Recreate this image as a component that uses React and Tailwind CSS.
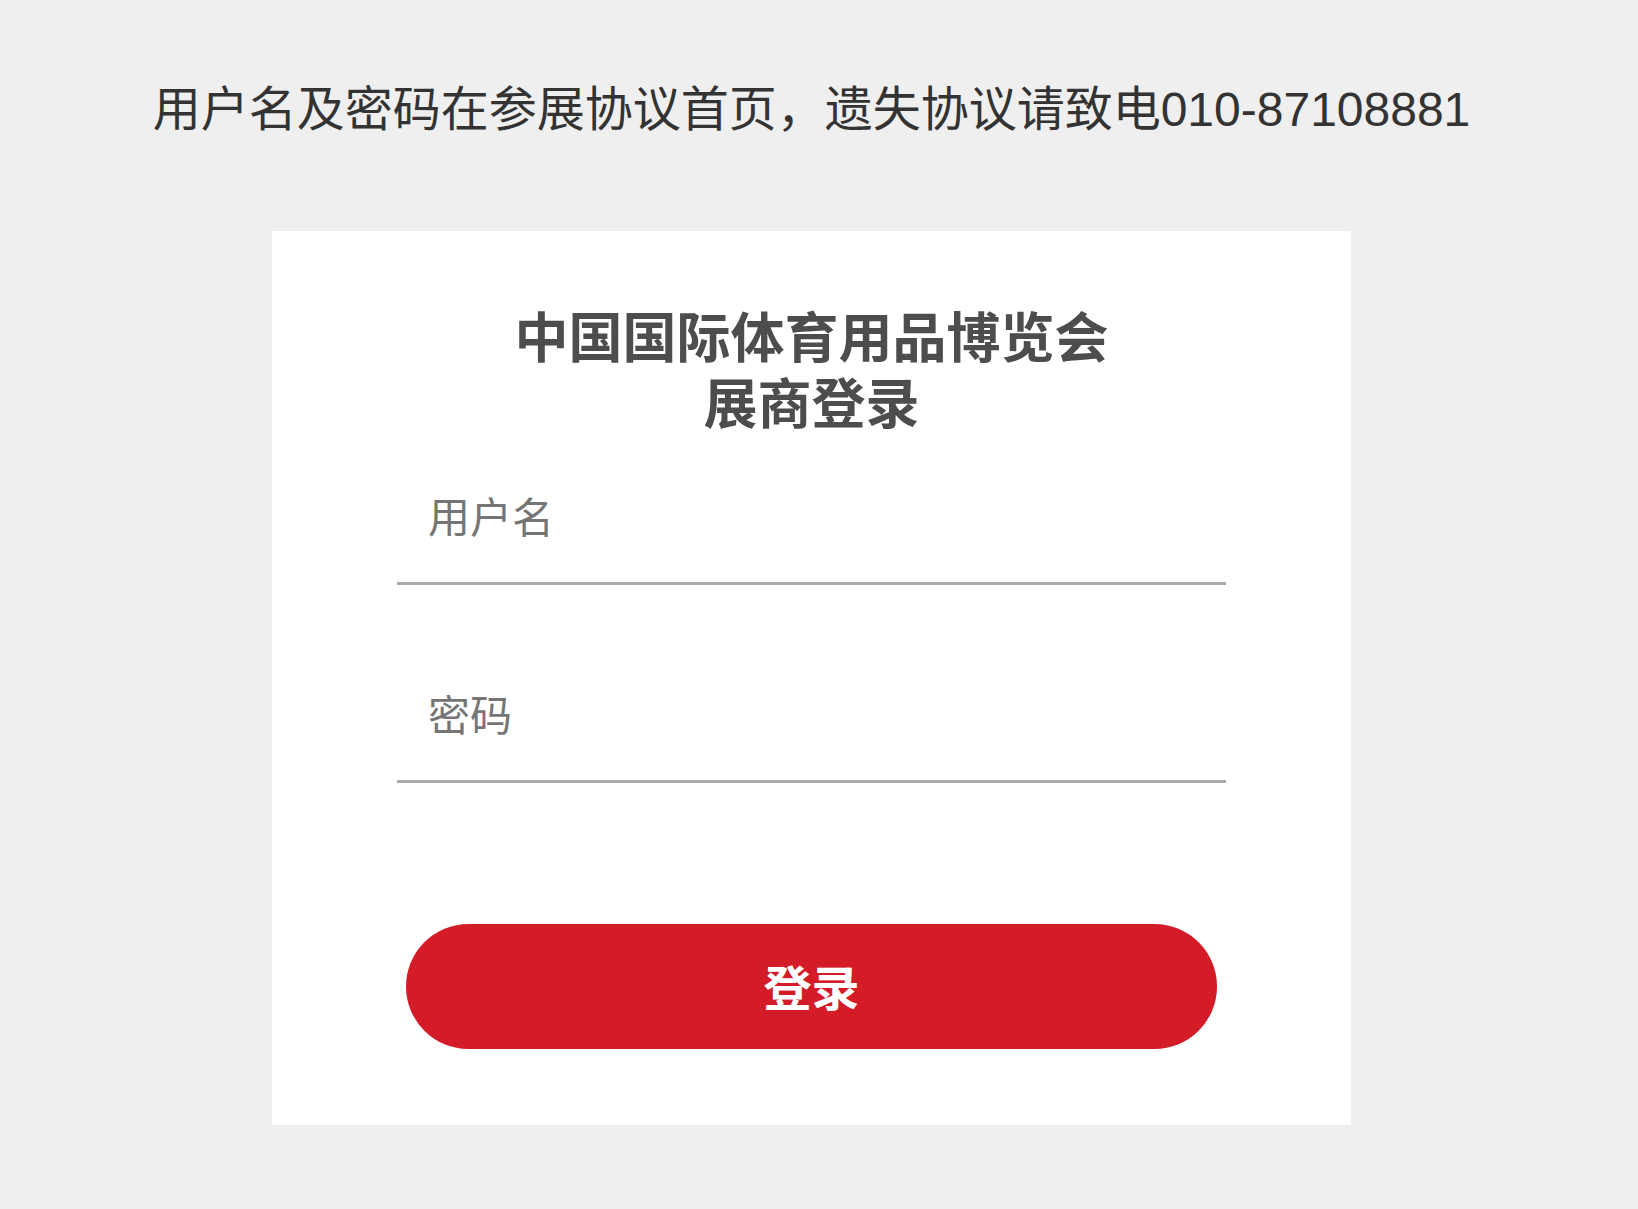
import { useState } from "react";

const font = "font-['Liberation_Sans','Noto_Sans_CJK_SC',sans-serif]";

export default function App() {
  const [username, setUsername] = useState("");
  const [password, setPassword] = useState("");

  return (
    <div className={`min-h-screen bg-[#efefef] ${font}`}>
      <div className="w-[1623px] pb-[84px]">
        <p className="pt-[74px] text-center text-[48px] leading-[72px] text-[#333333]">
          用户名及密码在参展协议首页，遗失协议请致电010-87108881
        </p>

        <form
          className="mx-auto mt-[85px] w-[1079px] bg-white px-[125px] pt-[75px] pb-[76px]"
          onSubmit={(e) => e.preventDefault()}
        >
          <h1 className="text-center text-[54px] font-bold leading-[66px] text-[#4d4d4d]">
            中国国际体育用品博览会
            <br />
            展商登录
          </h1>

          <input
            className={`mt-[17px] block h-[130px] w-full border-b-[3px] border-[#aaaaaa] bg-transparent pl-[31px] text-[42px] text-[#333333] outline-none placeholder:text-[#757575] ${font}`}
            placeholder="用户名"
            value={username}
            onChange={(e) => setUsername(e.target.value)}
          />
          <input
            type="password"
            className={`mt-[68px] block h-[130px] w-full border-b-[3px] border-[#aaaaaa] bg-transparent pl-[31px] text-[42px] text-[#333333] outline-none placeholder:text-[#757575] ${font}`}
            placeholder="密码"
            value={password}
            onChange={(e) => setPassword(e.target.value)}
          />

          <div className="mt-[141px] px-[9px]">
            <button
              type="submit"
              className={`flex h-[125px] w-full items-center justify-center rounded-full bg-[#d31c28] pt-[7px] text-[48px] font-bold text-white ${font}`}
            >
              登录
            </button>
          </div>
        </form>
      </div>
    </div>
  );
}
